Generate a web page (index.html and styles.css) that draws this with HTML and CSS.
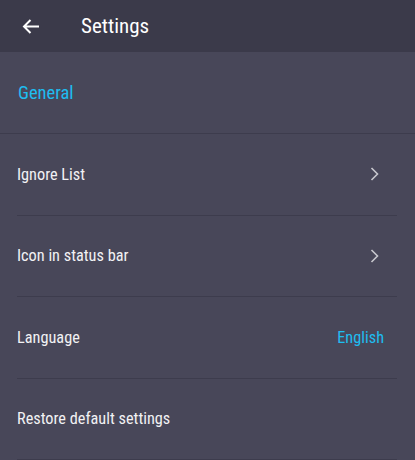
FILE: index.html
```html
<!DOCTYPE html>
<html lang="en">
<head>
    <meta charset="UTF-8">
    <meta name="viewport" content="width=device-width, initial-scale=1.0">
    <title>Settings</title>
    <link rel="stylesheet" href="styles.css">
</head>
<body>
    <div class="app-bar">
        <button class="back-btn" aria-label="Back">
            <svg width="24" height="24" viewBox="0 0 24 24">
                <path d="M20 12.5H5 M11.5 6L5 12.5L11.5 19" fill="none" stroke="#fff" stroke-width="2"/>
            </svg>
        </button>
        <h1 class="title">Settings</h1>
    </div>

    <div class="section-head">General</div>

    <div class="list">
        <div class="item">
            <span class="label">Ignore List</span>
            <svg class="chevron" width="10" height="14" viewBox="0 0 10 14">
                <path d="M1.5 1L7.5 7L1.5 13" fill="none" stroke="#c8c8ce" stroke-width="1.6"/>
            </svg>
        </div>
        <div class="item">
            <span class="label">Icon in status bar</span>
            <svg class="chevron" width="10" height="14" viewBox="0 0 10 14">
                <path d="M1.5 1L7.5 7L1.5 13" fill="none" stroke="#c8c8ce" stroke-width="1.6"/>
            </svg>
        </div>
        <div class="item">
            <span class="label">Language</span>
            <span class="value">English</span>
        </div>
        <div class="item">
            <span class="label">Restore default settings</span>
        </div>
    </div>
</body>
</html>
```

FILE: styles.css
```css
body {
    margin: 0;
    background: #484759;
    font-family: "Roboto Condensed", "Liberation Sans Narrow", "DejaVu Sans Condensed", Roboto, sans-serif;
    color: #f2f2f4;
}
.app-bar {
    height: 52px;
    background: #3b3a4a;
    display: flex;
    align-items: center;
}
.back-btn {
    background: none;
    border: none;
    padding: 0;
    margin-left: 19px;
    width: 24px;
    height: 24px;
    cursor: pointer;
}
.back-btn svg { display: block; }
.title {
    margin: 0 0 0 38px;
    font-size: 21px;
    font-weight: 400;
    color: #fff;
}
.section-head {
    height: 82px;
    box-sizing: border-box;
    padding-left: 18px;
    display: flex;
    align-items: center;
    border-bottom: 1px solid #3d3c4d;
    color: #1ebdf0;
    font-size: 18.5px;
    font-weight: 400;
}
.item {
    height: 81.5px;
    box-sizing: border-box;
    margin: 0 18px 0 17px;
    border-bottom: 1px solid #3d3c4d;
    display: flex;
    align-items: center;
    justify-content: space-between;
    font-size: 16.3px;
}
.chevron { margin-right: 17px; }
.value {
    color: #1ebdf0;
    margin-right: 13px;
}
```
